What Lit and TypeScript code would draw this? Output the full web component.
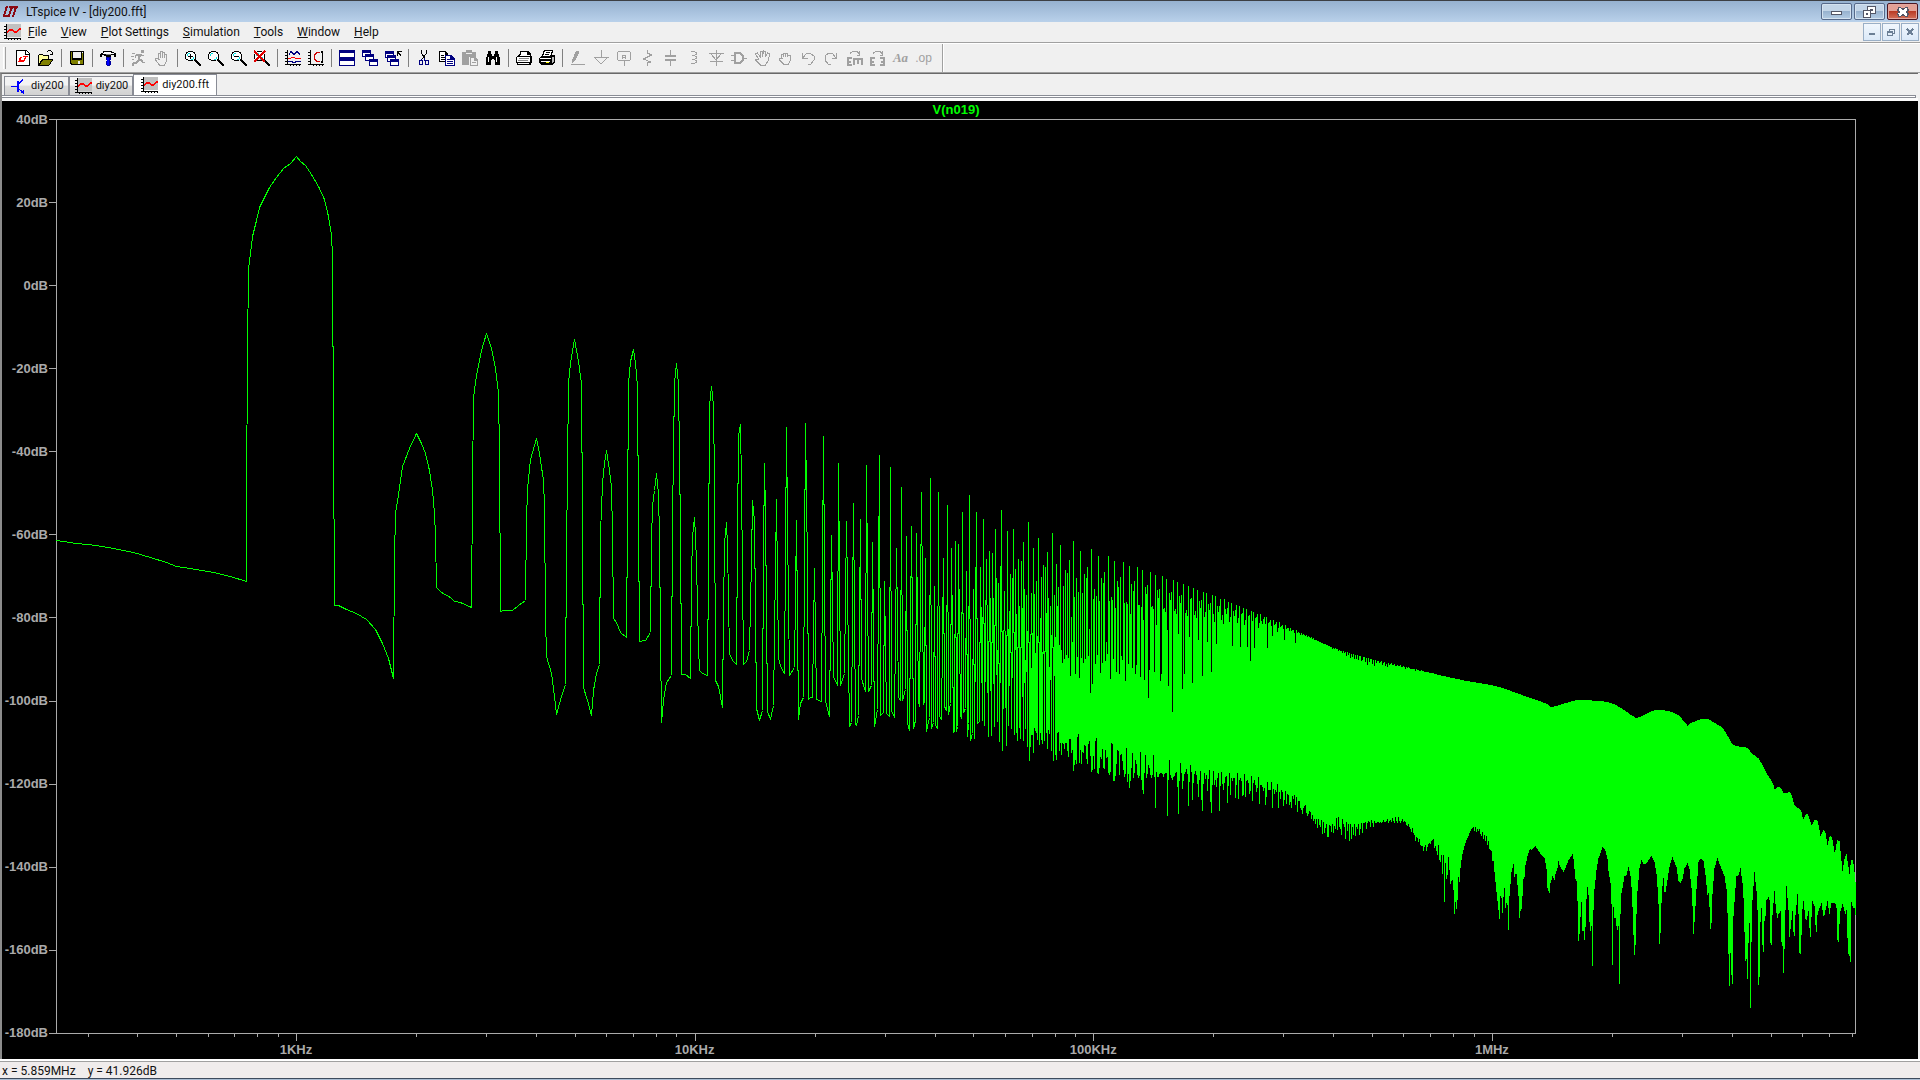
import { LitElement, html, css, svg, nothing, type TemplateResult, type SVGTemplateResult } from "lit";
import { customElement, property } from "lit/decorators.js";

/* ---------- Trace data ----------
   Every list is in thirds of a plot unit, measured from the origin of its band. */

type Point = [number, number];

const nums = (text: string): number[] => text.trim().split(/[\s,]+/).map(Number);
const pairs = (text: string): Point[] => {
  const flat = nums(text);
  const out: Point[] = [];
  for (let i = 0; i + 1 < flat.length; i += 2) out.push([flat[i], flat[i + 1]]);
  return out;
};
const place = (ox: number, oy: number, points: Point[]): Point[] =>
  points.map(([x, y]) => [Math.floor(ox + x / 3) + 0.5, Math.floor(oy + y / 3) + 0.5]);

const FUNDAMENTAL = pairs(`169 1321 190 1324 230 1330 290 1337 340 1346 400 1358 450 1371 500 1387 530 1398 570 1405
 640 1417 690 1430 738 1444 740 1212 743 750 746 508 752 460 758 410 768 360 778 322 790 298 808 263 830 232 850 206
 870 190 890 169 900 184 915 196 935 222 955 258 972 298 985 348 993 404 998 470 1001 1005 1003 1500`);

const LOW_HARMONICS = pairs(`403 855 415 857 440 867 470 880 500 899 525 927 548 970 565 1015 580 1075 583 717 587 578
 592 543 600 480 608 440 628 385 649 341 665 370 675 400 688 450 698 510 704 580 706 650 709 803 725 816 752 831
 762 843 780 847 815 861 817 500 821 232 828 165 843 92 859 40 873 85 885 145 894 220 897 400 901 874 910 871 936 870
 955 855 976 840 979 603 983 508 992 418 1009 355 1019 400 1030 480 1034 560 1037 888 1040 1010 1054 1060 1064 1130
 1069 1184 1084 1128 1096 1094 1100 700 1105 190 1112 130 1123 58 1136 125 1144 190 1147 600 1150 1102 1163 1140
 1174 1187 1180 1110 1190 1060 1198 1034 1202 640 1206 490 1212 430 1219 391 1227 450 1234 500 1237 640 1240 896
 1248 906 1262 936 1279 952 1282 600 1286 190 1292 125 1300 88 1306 130 1312 200 1316 600 1319 964 1335 961 1351 937
 1355 665 1358 555 1362 510 1369 460 1374 520 1378 650 1381 950 1385 1208 1390 1140 1400 1086 1414 1067 1418 600
 1424 190 1429 129 1435 190 1440 630 1444 1062 1455 1064 1471 1075 1475 770 1478 650 1483 591`);

const MID_HARMONICS = pairs(`43 351 46 405 50 490 56 740 59 810 68 820 82 827 85 500 89 15 94 -42 99 15 103 240 107 840
 116 860 127 922 130 640 134 430 139 366 142 440 148 760 158 780 169 794 173 400 176 110 181 72 184 250 190 793 199 784
 208 752 213 480 217 300 223 360 229 925 238 962 247 932 250 450 253 189 257 350 262 935 271 958 280 915 286 500
 289 297 295 775 303 805 313 821 319 81 323 380 328 827 343 802 349 360 355 958 362 910 370 892 376 69 381 500 385 897
 390 891 397 892 403 504 409 897 424 905 430 108 436 905 448 949 454 405 461 830 472 855 475 189 481 857 492 820
 499 363 508 980 514 968 520 309 526 970 529 976 535 947 541 357 545 835 556 875 559 195 565 875 574 857 577 426
 583 980 592 927 598 165 601 947 609 937 613 543 619 940 628 950 631 201 634 932 643 953 649 444 655 893 661 900
 664 261 667 902 675 867 679 408 683 970 688 990 694 378 700 986 706 962 709 399 715 905 718 920 724 276 729 912
 733 900 736 474 739 995 747 952 751 234 755 986 760 968 763 558 766 975 772 986 775 276 779 950 785 958 790 474
 794 920 799 930 802 315 805 942 811 910 814 444 820 998 823 993 826 423 829 995 833 980 835 432 841 945 844 955
 847 336 851 938 856 925 859 513 863 1010 865 970 868 285 871 1022 877 1000 880 567 884 1014 889 336 892 970 898 965
 901 501 906 960 910 357 913 975 919 477 925 1010 928 453 934 1005 937 459 943 980 946 387 952 963 955 549 958 1025
 964 330 967 1052 973 573 979 1037 982 393 985 975 991 522 995 985 1000 387 1002 1003 1006 507 1012 1020 1015 477
 1020 1014 1024 483 1030 1020 1030 426 1036 985 1039 585 1043 1040 1045 366 1049 1080 1054 579 1060 1058 1060 444
 1066 990 1069 543 1072 1017 1075 414 1078 1034 1084 531 1087 1031 1090 495 1093 1020 1096 501 1102 1046 1102 456
 1108 1000 1111 618 1114 1050 1117 399 1120 1080 1123 585 1129 1077 1129 492 1135 993 1135 561 1139 1052 1141 435`);

/* Where neighbouring lobes merge: x, top, bottom */
const MERGED = nums(`1009 752 1000 1012 747 1014 1018 747 985 1048 813 1040
 1051 813 1040 1054 805 1005 1057 804 1005 1063 714 985 1066 759 985 1069 759 1000 1072 800 1010 1078 740 1010
 1081 759 1000 1084 765 1020 1087 762 1020 1093 810 1020 1099 759 1000 1105 729 990 1108 800 990 1114 705 1045
 1126 813 1065 1132 744 1000 1138 807 1000`);

const HIGH_TOPS = nums(`15 330 368 138 356 90 345 98 353 60 407 231 306 3 171 402 114 350 156 413 33 353 159 368 102 356
 114 81 348 267 458 27 431 177 147 372 168 345 48 183 398 114 368 129 96 362 306 342 48 183 416 171 180 356 63 204 395
 123 141 401 111 348 360 66 189 422 186 192 371 78 222 132 383 153 123 401 375 81 195 195 410 201 90 240 419 141 162
 135 473 390 96 201 198 207 395 105 255 150 174 147 422 402 108 207 204 216 117 270 437 159 180 156 515 120 213 207 222
 126 282 168 189 165 446 132 401 219 210 228 138 291 177 174 428 144 225 213 234 150 300 183 204 180 407 156 231 216
 159 306 192 210 189 395 165 222 246 168 312 198 216 198 177 240 225 252 177 207 222 204 186 246 231 189 318 213 228
 210 195 249 234 198 321 222 219 204 255 240 207 321 228 225 362 213 243 216 324 234 231 222 264 249 222 243 252 237
 231 252 231 324 249 246 240 258 288 240 255 252 246 276 264 246 261 258 255 267 300 255 267 264 264 273 264 273 270
 270 279 309 270 279 276 279 285 279 285 282 285 288 285 291 288 291 294 291 297 294 300 300 300 303 303 306 306 309
 309 312 312 312 315 315 318 318 321 321 327 324 327 324 327 327 333 330 333 333 339 333 339 336 348 336 345 339 354
 342 351 342 357 345 357 345 360 348 348 363 360 351 351 366 354 375 354 366 357 357 372 360 378 360 369 363 363 369
 366 363 375 369 366 378 372 381 369 375 372 369 375 375 372 378 378 375 378 378 375 381 381 378 381 387 381 384 381
 384 387 387 387 387 387 392 387 390 390 393 393 390 393 393 396 396 396 396 396 399 399 399 399 399 402 402 402 405
 405 405 405 408 408 408 408 408 411 411 411 411 414 414 414 414 414 417 417 417 417 417`);

const HIGH_BOTTOMS = nums(`609 645 609 612 627 609 609 632 651 597 597 639 630 693 675 660 672 591 582 669 630 672 636
 639 615 618 657 672 612 603 648 696 690 648 687 603 594 699 702 684 651 657 627 684 687 630 654 651 699 705 696 609
 612 723 723 708 672 630 633 705 645 642 663 690 711 702 624 726 702 744 723 684 639 714 699 660 672 705 714 708 636
 720 750 762 699 645 714 702 675 684 705 714 705 645 711 804 696 711 711 702 699 699 702 711 702 699 699 828 720 660
 705 714 720 711 708 699 696 741 822 723 669 699 747 723 702 696 687 702 798 726 675 696 780 729 702 693 705 732 771
 720 693 780 813 732 699 717 705 753 717 690 786 819 735 693 735 720 741 714 699 813 738 696 732 750 729 711 708 789
 738 699 765 714 723 714 714 774 735 699 777 720 714 723 768 765 702 771 723 720 729 762 753 708 783 729 720 735 756
 744 711 792 735 735 741 753 744 795 771 726 750 750 750 726 804 747 762 750 756 732 804 756 777 750 756 798 780 753
 792 762 765 795 786 804 768 777 765 795 771 816 783 783 804 810 822 804 798 795 819 828 822 813 816 837 825 843 837
 852 837 864 837 855 861 840 882 846 879 864 852 891 891 855 858 876 852 879 858 867 834 870 831 861 867 885 837 852
 861 897 846 873 852 903 852 897 861 885 852 888 861 867 852 885 867 849 879 849 849 846 867 849 843 846 861 840 849
 861 843 849 849 846 846 849 846 849 846 840 846 846 843 837 849 843 840 846 834 843 849 831 843 849 831 843 849 843
 837 846 843 846 855 858 852 861 867 876 864 879 885 903 891 894 906 897 915 918 918 933 921 915 933 921 912 909 912
 903 900 897 924 918 933 945 915 960 966 945 1002 945 1086 969 1017 1005 951 990 1032 1023 1020 1050 1122 1086 1107
 1080 1011 1026`);

const TAIL_TOPS = pairs(`0 112 40 121 70 126 100 131 124 135 150 142 180 152 210 163 240 174 270 184 290 192 303 201
 315 199 335 193 360 185 380 180 420 180 430 183 460 184 480 188 497 195 520 209 540 223 558 234 575 229 605 213
 615 210 638 210 665 216 685 225 700 242 712 257 720 250 740 242 755 237 775 237 790 247 810 258 822 270 835 292
 848 315 862 319 885 321 893 325 905 340 927 357 938 378 948 398 963 420 968 430 974 449 983 441 990 442 1000 458
 1010 459 1018 455 1024 465 1033 495 1045 505 1053 511 1058 537 1062 535 1067 522 1073 522 1079 540 1085 557 1093 540
 1101 538 1106 560 1111 587 1119 571 1125 573 1132 614 1139 588 1145 590 1154 641 1161 600 1168 604 1177 692 1184 650
 1189 643 1198 701 1203 660 1209 662 1214 705 1217 738`);

const TAIL_BOTTOMS = pairs(`0 732 3 723 6 720 9 750 12 822 15 786 18 807 21 780 24 711 27 726 30 693 36 645 45 610
 54 590 63 568 70 561 73 573 76 562 79 575 82 567 85 573 88 568 91 583 94 587 97 576 100 597 103 586 106 602 109 588
 112 614 115 603 118 627 124 633 127 663 130 663 136 726 142 783 148 837 151 768 154 774 157 819 160 772 163 744
 166 804 169 789 172 795 175 870 178 768 181 732 184 697 190 672 193 711 196 702 199 702 202 735 205 768 208 834
 211 813 214 807 217 768 220 717 223 711 226 675 232 648 240 625 244 630 255 618 262 628 270 640 284 655 289 687
 292 744 298 759 301 730 307 708 313 720 316 702 322 684 325 663 328 675 340 696 346 684 355 660 367 642 370 657
 376 717 380 723 382 783 385 903 388 882 391 832 394 786 397 873 400 873 403 900 406 861 409 777 412 741 415 766
 418 846 421 873 424 857 427 978 430 810 433 747 439 690 445 655 457 621 466 632 472 657 475 693 481 730 484 792
 487 975 490 801 493 834 496 834 499 858 502 870 505 857 508 1032 511 822 514 760 520 726 523 708 529 706 535 681
 541 707 544 741 547 801 550 885 553 945 556 915 559 822 562 753 568 684 574 660 580 672 589 670 604 648 613 666
 619 702 622 741 625 792 628 912 631 879 634 789 637 738 640 714 643 756 646 756 652 720 658 680 667 651 679 682
 685 723 691 729 697 718 703 685 712 669 718 688 724 744 727 798 730 882 733 846 739 747 745 667 752 654 760 662
 766 705 772 766 775 759 778 801 781 867 784 849 787 762 793 684 802 654 812 682 823 708 829 747 832 819 835 942
 838 1038 841 939 844 1005 847 1032 850 828 856 745 859 708 866 706 871 684 877 730 880 774 883 876 886 963 889 957
 892 1017 895 909 898 849 901 1104 904 906 907 780 913 696 919 753 922 810 925 1035 928 1011 931 846 934 804 937 915
 940 936 943 843 946 828 949 780 955 771 958 780 961 909 964 915 967 825 973 753 976 792 981 837 985 822 991 813
 994 906 997 918 1000 999 1003 927 1006 810 1009 738 1015 810 1018 891 1021 867 1027 813 1030 876 1033 888 1036 825
 1042 762 1045 822 1048 939 1053 944 1055 825 1060 783 1066 837 1069 840 1075 813 1078 864 1081 891 1084 830 1087 783
 1093 798 1096 855 1099 876 1102 825 1106 808 1114 790 1121 834 1132 783 1138 822 1144 788 1156 791 1160 810 1162 900
 1165 906 1168 852 1171 812 1178 790 1184 819 1187 822 1190 804 1193 939 1198 948 1201 966 1204 786 1209 804 1215 804
 1217 843`);

/** Linear interpolation in a sorted list of points. */
function sample(points: Point[], x: number): number {
  for (let i = 1; i < points.length; i++) {
    const [x1, y1] = points[i];
    if (x <= x1) {
      const [x0, y0] = points[i - 1];
      return y0 + ((y1 - y0) * (x - x0)) / (x1 - x0);
    }
  }
  return points[points.length - 1][1];
}

function tracePath(): string {
  const line = [
    ...place(0, 100, FUNDAMENTAL),
    ...place(200, 320, LOW_HARMONICS),
    ...place(680, 400, MID_HARMONICS),
  ];
  return "M" + line.map((p) => p.join(" ")).join("L");
}

function densePath(): string {
  let d = "";
  const column = (x: number, top: number, bottom: number) => {
    d += `M${Math.floor(x) + 0.5} ${Math.round(top)}V${Math.round(bottom)}`;
  };
  for (let i = 0; i + 2 < MERGED.length; i += 3)
    column(680 + MERGED[i] / 3, 400 + MERGED[i + 1] / 3, 400 + MERGED[i + 2] / 3);
  for (let i = 0; i < 400; i++) {
    const top = HIGH_TOPS[Math.min(i, HIGH_TOPS.length - 1)];
    const bottom = HIGH_BOTTOMS[Math.min(i, HIGH_BOTTOMS.length - 1)];
    column(1060 + i, 540 + top / 3, 540 + bottom / 3);
  }
  for (let i = 10; i <= 405; i++) {
    const at = i * 3 + 1;
    column(1450 + i, 640 + sample(TAIL_TOPS, at) / 3, 640 + sample(TAIL_BOTTOMS, at) / 3);
  }
  return d;
}

/* ---------- Icons ---------- */

const INK = "#000";
const NAVY = "#000080";
const OFF = "#a0a0a0";
const p = (d: string, stroke = INK, width = 1, fill = "none") =>
  svg`<path d=${d} stroke=${stroke} stroke-width=${width} fill=${fill}></path>`;
const f = (d: string, fill = INK) => svg`<path d=${d} fill=${fill}></path>`;

const lens = (inner: SVGTemplateResult) => svg`
  ${f("M3 1h5v1h2v2h1v5h-1v1h-2v1H3v-1H1V9H0V4h1V2h2z", INK)}
  ${f("M3 2h5v1h1v1h1v5H9v1H3V9H1V4h1V3h1z", "#fff")}
  ${f("M3 3h2v1H3zM2 4h1v2H2zM8 7h1v2H8zM6 9h2v1H6z", "#00e0e0")}
  ${f("M9 9h2v1h1v1h1v1h1v1h1v1h1v2h-2v-1h-1v-1h-1v-1h-1v-1h-1v-1H9z", INK)}
  ${inner}`;
const chart = svg`
  ${f("M2 0h15v13H2z", "#c0c0c0")}
  ${p("M2.5 0v15M0 2.5h2M0 5.5h2M0 8.5h2M0 11.5h2M0 14.5h17M4.5 14v2M7.5 14v2M10.5 14v2M13.5 14v2M16.5 14v2")}
  ${p("M3 7.5h1l2-2h2l2 2h3l3-3h1", "#f00", 2)}`;
const windowShape = (x: number, y: number) => svg`
  ${f(`M${x} ${y}h9v7h-9z`, NAVY)}${f(`M${x + 1} ${y + 3}h7v3h-7z`, "#fff")}`;
const plotAxes = p("M2.5 0v15M0 2.5h2M0 5.5h2M0 8.5h2M0 11.5h2M0 14.5h16M5.5 14v2M8.5 14v2M11.5 14v2M14.5 14v2");

const ICONS: Record<string, SVGTemplateResult> = {
  logo: svg`${p("M5 0L2 9.500h5L10 1", "#8b0a14", 2)}${f("M7 0h9v2H7z", "#8b0a14")}${p("M14 1l-3 10", "#8b0a14", 2)}`,
  chart,
  transistor: svg`${p("M1 8.5h6M8 6.500l4-4V1M8 10.5l4 3 2 2M10.500 14.500h3v-3", "#00f", 1)}${f("M7 3h2v11H7z", "#00f")}`,
  new: svg`${f("M1 0h10l4 4v12H1z")}${f("M2 1h8v4h4v10H2z", "#fff")}${f("M11 1l3 3h-3z", "#fff")}${f("M5 7h2l-1 3h3l1-3H8V6h5l-1 1h-1l-1 4-2 1H3z", "#f00")}`,
  open: svg`${f("M0 5h1V4h4v1h6v4h4v1l-4 6H0z")}${f("M1 5h4v1h5v3H4l-3 5z", "#ffff9c")}${f("M5 10h9l-3 5H2z", "#808000")}${p("M8.5 2.500l2-2h2l2 2V4M12 4.5h3", INK)}`,
  save: svg`${f("M1 1h14v14H2l-1-1z")}${f("M2 2h1v8h10V2h1v12H3l-1-1z", "#808000")}${f("M4 2h8v6H4z", "#efefef")}${f("M9 11h2v3H9z", "#efefef")}${f("M13 2h1v1h-1z", "#fff")}`,
  hammer: svg`${f("M0 4h1V3h2V1h9v1h2v1h2v4h-2V5h-3v2H6V6H4V5H2v2H0z")}${f("M1 4h2V3h1V2h7v1h3v1H1z", "#fff")}${f("M6 4h5v1H6z", "#808080")}${f("M6 7h5v3h-1v1h1v4h-1v1H7v-1H6v-4h1v-1H6z", "#0000a0")}${f("M7 8h2v7H7z", "#00f")}`,
  run: svg`${f("M10 0h3v3h-3zM6 4h5v1h2v1h-3l-1 3h2v1h1v2h2v1h-3l-1-2H8l-2 3H3v2H1v-2l1-2h3l2-3V6H5v2H4V5z", OFF)}${p("M1 3.5h3M0 6.5h3M1 9.5h2", OFF)}`,
  hand: svg`${p("M4.500 10V3.500h2V8V1.500h2V8V2.500h2V8V4.500h2V11l-2 4h-5l-4-5v-2h2l2 2", OFF)}`,
  zoomIn: lens(f("M5 4h1v2h2v1H6v2H5V7H3V6h2z")),
  zoom: lens(svg``),
  zoomOut: lens(f("M3 6h5v1H3z")),
  zoomFit: svg`${lens(svg``)}${p("M0 1l11 11M11 1L0 12", "#e00000", 2)}`,
  autorange: svg`${plotAxes}${p("M4 4.500l2-3 3 3 3-3 3 3", NAVY)}${p("M3 8.500h2l2-1h2l2 1h5", "#f00")}${p("M3 11.5h4v1h3v-1h6", NAVY)}`,
  manual: svg`${plotAxes}${p("M12 2.500H9l-3 3v3l3 3h3", "#c00")}${p("M14.500 1v12M13 2.500l1-1 1 1M13 11.5l1 1 1-1", INK)}`,
  tile: svg`${f("M0 0h16v16H0z", NAVY)}${f("M1 3h14v4H1zM1 11h14v4H1z", "#fff")}`,
  cascade: svg`${windowShape(0, 0)}${windowShape(3, 4)}${windowShape(7, 9)}`,
  closeAll: svg`${windowShape(0, 1)}${windowShape(2, 5)}${windowShape(5, 9)}${p("M12.500 6V1.500h4M13 2l3 4", INK)}`,
  cut: svg`${p("M5.500 0v3l3 5M10.500 0v3l-4 6", INK)}${p("M8.500 8v2l1 1M5.500 9v2M4 10.5h2v4H3v-3zM9 10.5h3v4h-2l-1-1z", NAVY)}`,
  copy: svg`${f("M0 1h6l3 3v8H0z")}${f("M1 2h5v3h2v6H1z", "#fff")}${p("M2 5.500h3M2 7.500h5M2 9.500h5")}${f("M6 5h6l4 4v7H6z", NAVY)}${f("M7 6h4v4h4v5H7z", "#fff")}${p("M8 9.500h3M8 11.5h6M8 13.500h6", NAVY)}`,
  paste: svg`${f("M0 2h4V0h6v2h4v5H7v8H0z", OFF)}${f("M8 7h5l3 3v6H8z", OFF)}${f("M9 8h3v3h3v4H9z", "#f0f0f0")}${p("M4 3.500h6", "#efefef")}${p("M10 12.5h4", OFF)}`,
  find: svg`${f("M3 1h3v3h1v2h2V4h1V1h3v3h1v3h1v8h-5v-5H9V9H7v1H6v5H1V7h1V4h1z")}${f("M3 7h1v5H3zM11 7h1v5h-1z", "#fff")}`,
  preview: svg`${f("M4 1h8l3 3v2h1v7h-1v2H1v-2H0V7l4-3z")}${f("M5 2h6v3h3v1H3l2-2zM1 7h13v5H1z", "#fff")}${p("M3 8.500h10M2 10.5h10", "#888", 1)}${f("M2 13h11v1H2z", "#fff")}`,
  print: svg`${f("M5 0h9v1l-1 4h2l1 1v6l-3 3H2l-2-2V8l3-3z")}${f("M6 1h7l-2 5H4zM1 8h11v1H1z", "#fff")}${p("M7 2.500h4M6 4.500h4")}${f("M2 11h9v1H2z", "#fff")}${f("M7 12h3v1H7z", "#ff0")}${f("M13 7h2v4l-2 2z", "#bbb")}`,
  wire: svg`${f("M6 1h3v2L5 11l-3 2v-3z", OFF)}${p("M1 14.500h14", OFF)}`,
  ground: svg`${p("M8.500 0v7M1 7.500h15M2 8l6 6 6-6", OFF)}`,
  label: svg`${p("M1.500 2v8M14.500 2v8M2 1.500h12M2 10.5h12M8.500 11v5M6.500 9V5h3v4M6 7.500h3", OFF)}`,
  resistor: svg`${p("M8.500 0v3l4 2-8 4 7 3-3 1v3", OFF)}`,
  capacitor: svg`${p("M8.500 0v6M8.500 10v6", OFF)}${f("M3 5h11v2H3zM3 9h11v2H3z", OFF)}`,
  inductor: svg`${p("M6 1.500h3l2 1v2l-2 1H7h2l2 1v2l-2 1H7h2l2 1v2l-2 1H6", OFF)}`,
  diode: svg`${p("M8.500 0v16M1 3.500h15M3 4l5 6 5-6M2 11.5h13", OFF)}`,
  gate: svg`${p("M0 5.500h4M0 10.500h4M13 8.500h3", OFF)}${p("M4 3h5l3 3v4l-3 3H4z", OFF, 2)}`,
  move: svg`${p("M4.500 9L1.500 4l2-1 3 4V1.500h2V7l1-6 2 .500V7l2-4 2 1-1 6-3 5h-5l-5-5 1-1z", OFF)}`,
  drag: svg`${p("M4.500 9V4.500h2V7V3.500h2V7V3.500h2V7V5.500h3V10l-2 4h-5l-4-4v-2h3", OFF)}`,
  undo: svg`${p("M2.500 3v5h5M3 8l3-4 4-1 4 3v4l-3 4H8", OFF)}`,
  redo: svg`${p("M13.500 3v5h-5M13 8l-3-4-4-1-4 3v4l3 4h3", OFF)}`,
  rotate: svg`${p("M4.500 4V3l3-2h3l3 3M13.500 1v4h-3", OFF)}${p("M6 8H2v7h4M2 11.500h3M8 15V9h8v6M12 9v5", OFF, 2)}`,
  mirror: svg`${p("M4.500 4V3l3-2h3l3 3M13.500 1v4h-3", OFF)}${p("M6 8H2v7h4M2 11.500h3M11 8h4v7h-4M15 11.500h-3", OFF, 2)}`,
};

const icon = (name: string): TemplateResult =>
  html`<svg class="icon" viewBox="0 0 17 16" aria-hidden="true">${ICONS[name] ?? nothing}</svg>`;

type Tool = { id: string; label: string; off?: boolean; glyph?: string };
const t = (id: string, label: string, off = false, glyph?: string): Tool => ({ id, label, off, glyph });

const TOOL_GROUPS: Tool[][] = [
  [t("new", "New schematic"), t("open", "Open")],
  [t("save", "Save")],
  [t("hammer", "Control panel")],
  [t("run", "Run", true), t("hand", "Halt", true)],
  [t("zoomIn", "Zoom in"), t("zoom", "Pan"), t("zoomOut", "Zoom out"), t("zoomFit", "Zoom full extents")],
  [t("autorange", "Autorange"), t("manual", "Manual limits")],
  [t("tile", "Tile windows"), t("cascade", "Cascade windows"), t("closeAll", "Close all")],
  [t("cut", "Cut"), t("copy", "Copy"), t("paste", "Paste", true), t("find", "Find")],
  [t("preview", "Print preview"), t("print", "Print")],
  [
    t("wire", "Wire", true), t("ground", "Ground", true), t("label", "Label net", true),
    t("resistor", "Resistor", true), t("capacitor", "Capacitor", true), t("inductor", "Inductor", true),
    t("diode", "Diode", true), t("gate", "Component", true), t("move", "Move", true), t("drag", "Drag", true),
    t("undo", "Undo", true), t("redo", "Redo", true), t("rotate", "Rotate", true), t("mirror", "Mirror", true),
    t("text", "Text", true, "Aa"), t("op", "SPICE directive", true, ".op"),
  ],
];

/* ---------- Plot ---------- */

const F_MIN = 250;
const F_MAX = 8_192_000;
const freqPercent = (hz: number) => (100 * Math.log10(hz / F_MIN)) / Math.log10(F_MAX / F_MIN);

@customElement("fft-plot")
export class FftPlot extends LitElement {
  @property() trace = "";

  static styles = css`
    :host {
      display: grid;
      grid-template-columns: 54px minmax(0, 1fr) 62px;
      grid-template-rows: 18px minmax(0, 1fr) 25px;
      background: #000;
      color: #aaa;
      font: bold 13px/16px "Liberation Sans", Arial, sans-serif;
    }
    .title {
      grid-column: 2;
      text-align: center;
      color: #0f0;
      line-height: 18px;
    }
    .levels {
      grid-column: 1;
      grid-row: 2;
      display: flex;
      flex-direction: column;
      justify-content: space-between;
    }
    .level {
      height: 1px;
      display: flex;
      align-items: center;
      justify-content: flex-end;
      gap: 1px;
    }
    .level::after {
      content: "";
      width: 7px;
      height: 1px;
      background: #aaa;
    }
    .frame {
      grid-column: 2;
      grid-row: 2;
      display: grid;
      box-shadow: inset 0 0 0 1px #aaa;
    }
    .frame svg {
      width: 100%;
      height: 100%;
      min-height: 0;
    }
    .curve {
      fill: none;
      stroke: #0f0;
      stroke-width: 1;
      stroke-linejoin: bevel;
      shape-rendering: crispEdges;
    }
    .freqs {
      grid-column: 2;
      grid-row: 3;
      position: relative;
    }
    .tick {
      position: absolute;
      top: 0;
      width: 1px;
      height: 3px;
      background: #aaa;
    }
    .tick.major {
      height: 7px;
    }
    .freq {
      position: absolute;
      top: 8px;
      transform: translateX(-50%);
    }
  `;

  private levels = Array.from({ length: 12 }, (_, i) => 40 - 20 * i);
  private decades: [number, string][] = [
    [1e3, "1KHz"],
    [1e4, "10KHz"],
    [1e5, "100KHz"],
    [1e6, "1MHz"],
  ];

  private ticks() {
    const out: TemplateResult[] = [];
    for (const decade of [1e2, 1e3, 1e4, 1e5, 1e6]) {
      for (let n = 1; n < 10; n++) {
        const hz = n * decade;
        if (hz < F_MIN || hz > F_MAX) continue;
        out.push(html`<i class="tick ${n === 1 ? "major" : ""}" style="left:${freqPercent(hz)}%"></i>`);
      }
    }
    return out;
  }

  render() {
    return html`
      <div class="title">${this.trace}</div>
      <div class="levels">${this.levels.map((db) => html`<span class="level">${db}dB</span>`)}</div>
      <div class="frame">
        <svg viewBox="56 119 1800 915" preserveAspectRatio="none" role="img" aria-label="Spectrum of ${this.trace}">
          <path class="curve" d=${tracePath()}></path>
          <path class="curve" d=${densePath()}></path>
        </svg>
      </div>
      <div class="freqs">
        ${this.ticks()}
        ${this.decades.map(([hz, text]) => html`<span class="freq" style="left:${freqPercent(hz)}%">${text}</span>`)}
      </div>
    `;
  }
}

/* ---------- Application window ---------- */

@customElement("app-root")
export class AppRoot extends LitElement {
  static styles = css`
    :host {
      display: flex;
      flex-direction: column;
      height: 100vh;
      overflow: hidden;
      background: #f0f0f0;
      color: #111;
      font: 12px/16px Roboto, "Open Sans", sans-serif;
    }
    button {
      margin: 0;
      padding: 0;
      border: 0;
      background: none;
      color: inherit;
      font: inherit;
    }
    svg {
      display: block;
      shape-rendering: crispEdges;
    }
    .icon {
      width: 17px;
      height: 16px;
      flex: none;
    }
    .titlebar {
      display: flex;
      align-items: center;
      height: 21px;
      gap: 8px;
      padding: 0 2px;
      border-top: 1px solid #3c3f44;
      background: linear-gradient(#96b1d0, #b9d1ea);
    }
    .titlebar h1 {
      flex: 1;
      margin: 0;
      font: inherit;
    }
    .caption {
      display: flex;
      gap: 2px;
    }
    .caption button {
      display: grid;
      place-items: center;
      width: 31px;
      height: 17px;
      border: 1px solid #56698a;
      border-radius: 2px;
      box-shadow: inset 0 0 0 1px #d4e2f0;
      background: linear-gradient(#c3d5e8 45%, #98b2cf 50%, #b4cce4);
    }
    .caption .close {
      border-color: #4b1722;
      box-shadow: inset 0 0 0 1px #e2a79f;
      background: linear-gradient(#e3a196 45%, #b93c26 50%, #d3705a);
    }
    .menubar {
      display: flex;
      align-items: center;
      height: 20px;
      padding: 0 1px 0 4px;
      border-bottom: 1px solid #a0a0a0;
    }
    .menus {
      display: flex;
      flex: 1;
      gap: 14px;
      padding-left: 7px;
    }
    .mdi {
      display: flex;
      gap: 1px;
    }
    .mdi button {
      display: grid;
      place-items: center;
      width: 18px;
      height: 18px;
      border: 1px solid #9aafc6;
      background: linear-gradient(#f1f7fd, #dbe9f8);
    }
    .toolbar {
      display: flex;
      align-items: center;
      height: 28px;
      border-top: 1px solid #fff;
      border-bottom: 1px solid #a0a0a0;
    }
    .tools {
      display: flex;
      align-items: center;
      align-self: stretch;
      padding: 0 7px 0 3px;
      border-right: 1px solid #a0a0a0;
      box-shadow: 1px 0 #fff;
    }
    .tools::before {
      content: "";
      width: 1px;
      height: 22px;
      margin-right: 6px;
      border-left: 1px solid #fff;
      border-right: 1px solid #a0a0a0;
    }
    .group {
      display: flex;
    }
    .group + .group::before {
      content: "";
      width: 1px;
      height: 18px;
      margin: 2px 4px 0 3px;
      background: #808080;
    }
    .tool {
      display: grid;
      place-items: center;
      width: 23px;
      height: 22px;
    }
    .glyph {
      color: #a0a0a0;
      font: italic bold 13px/16px "Liberation Serif", serif;
    }
    .glyph.op {
      font: 12px/16px "Liberation Sans", sans-serif;
    }
    .workspace {
      display: flex;
      flex: 1;
      flex-direction: column;
      min-height: 0;
      margin-right: 2px;
      border-top: 1px solid #696969;
      border-left: 2px solid #8c8c8c;
    }
    .tabs {
      display: flex;
      align-items: flex-end;
      height: 21px;
      padding-left: 2px;
      font-size: 11px;
    }
    .tab {
      display: flex;
      align-items: center;
      gap: 4px;
      height: 19px;
      padding: 0 4px 0 5px;
      border: 1px solid #898c95;
      border-bottom: 0;
      background: linear-gradient(#f3f3f3 45%, #dcdcdc 50%, #d2d2d2);
    }
    .tab.active {
      height: 21px;
      padding: 0 7px;
      background: #fff;
    }
    .pane {
      height: 1px;
      margin-right: 2px;
      border: 1px solid #898c95;
      border-left: 0;
      background: #fff;
    }
    .rim {
      height: 3px;
      background: #fbfbfb;
    }
    fft-plot {
      flex: 1;
      min-height: 0;
    }
    .status {
      display: flex;
      gap: 12px;
      height: 16px;
      padding: 0 2px;
      border-top: 1px solid #a0a0a0;
      box-shadow: 0 -2px #fff;
      margin-top: 2px;
      background: #f0ecec;
      line-height: 18px;
    }
    .desktop {
      height: 1px;
      border-top: 1px solid #3d4a5c;
      background: #a9bcd2;
    }
  `;

  private menus = ["File", "View", "Plot Settings", "Simulation", "Tools", "Window", "Help"];
  private tabs = [
    { name: "diy200", icon: "transistor" },
    { name: "diy200", icon: "chart" },
    { name: "diy200.fft", icon: "chart", active: true },
  ];

  private tool(tool: Tool) {
    return html`<button class="tool" aria-label=${tool.label} ?disabled=${tool.off}>
      ${tool.glyph ? html`<span class="glyph ${tool.id}">${tool.glyph}</span>` : icon(tool.id)}
    </button>`;
  }

  render() {
    return html`
      <header class="titlebar">
        <svg width="16" height="12" viewBox="0 0 16 12" aria-hidden="true">${ICONS.logo}</svg>
        <h1>LTspice IV - [diy200.fft]</h1>
        <div class="caption">
          <button aria-label="Minimize">
            <svg width="13" height="9" viewBox="0 0 13 9">${p("M1.500 4.500h10v3h-10z", "#535666", 1, "#fff")}</svg>
          </button>
          <button aria-label="Restore">
            <svg width="13" height="12" viewBox="0 0 13 12">
              ${p("M4.500.500h8v7h-8z", "#535666", 1, "#fff")}${p("M7.500 3.500h2v1h-2z", "#535666")}
              ${p("M.500 4.500h7v7h-7z", "#535666", 1, "#fff")}${p("M3.500 7.500h1v1h-1z", "#535666")}
            </svg>
          </button>
          <button class="close" aria-label="Close">
            <svg width="12" height="10" viewBox="0 0 12 10">
              ${p("M1 1l10 8M11 1L1 9", "#535666", 5)}${p("M2 2l8 6M10 2L2 8", "#fff", 3)}
            </svg>
          </button>
        </div>
      </header>

      <nav class="menubar">
        ${icon("chart")}
        <div class="menus">
          ${this.menus.map((name) => html`<button><u>${name[0]}</u>${name.slice(1)}</button>`)}
        </div>
        <div class="mdi">
          <button aria-label="Minimize document">
            <svg width="8" height="8" viewBox="0 0 8 8">${f("M1 5h6v2H1z", "#6b7f95")}</svg>
          </button>
          <button aria-label="Restore document">
            <svg width="8" height="8" viewBox="0 0 8 8">
              ${p("M2.500 3V1h5v4H6", "#6b7f95")}${p("M.500 3.500h5v4h-5zM0 4h6", "#6b7f95")}
            </svg>
          </button>
          <button aria-label="Close document">
            <svg width="8" height="8" viewBox="0 0 8 8">${p("M1 1l6 6M7 1L1 7", "#6b7f95", 2)}</svg>
          </button>
        </div>
      </nav>

      <div class="toolbar">
        <div class="tools" role="toolbar">
          ${TOOL_GROUPS.map((group) => html`<div class="group">${group.map((item) => this.tool(item))}</div>`)}
        </div>
      </div>

      <main class="workspace">
        <div class="tabs" role="tablist">
          ${this.tabs.map(
            (tab) => html`<button class="tab ${tab.active ? "active" : ""}" role="tab" aria-selected=${tab.active ? "true" : "false"}>
              ${icon(tab.icon)}<span>${tab.name}</span>
            </button>`
          )}
        </div>
        <div class="pane"></div>
        <div class="rim"></div>
        <fft-plot trace="V(n019)"></fft-plot>
      </main>

      <footer class="status"><span>x = 5.859MHz</span><span>y = 41.926dB</span></footer>
      <div class="desktop"></div>
    `;
  }
}
